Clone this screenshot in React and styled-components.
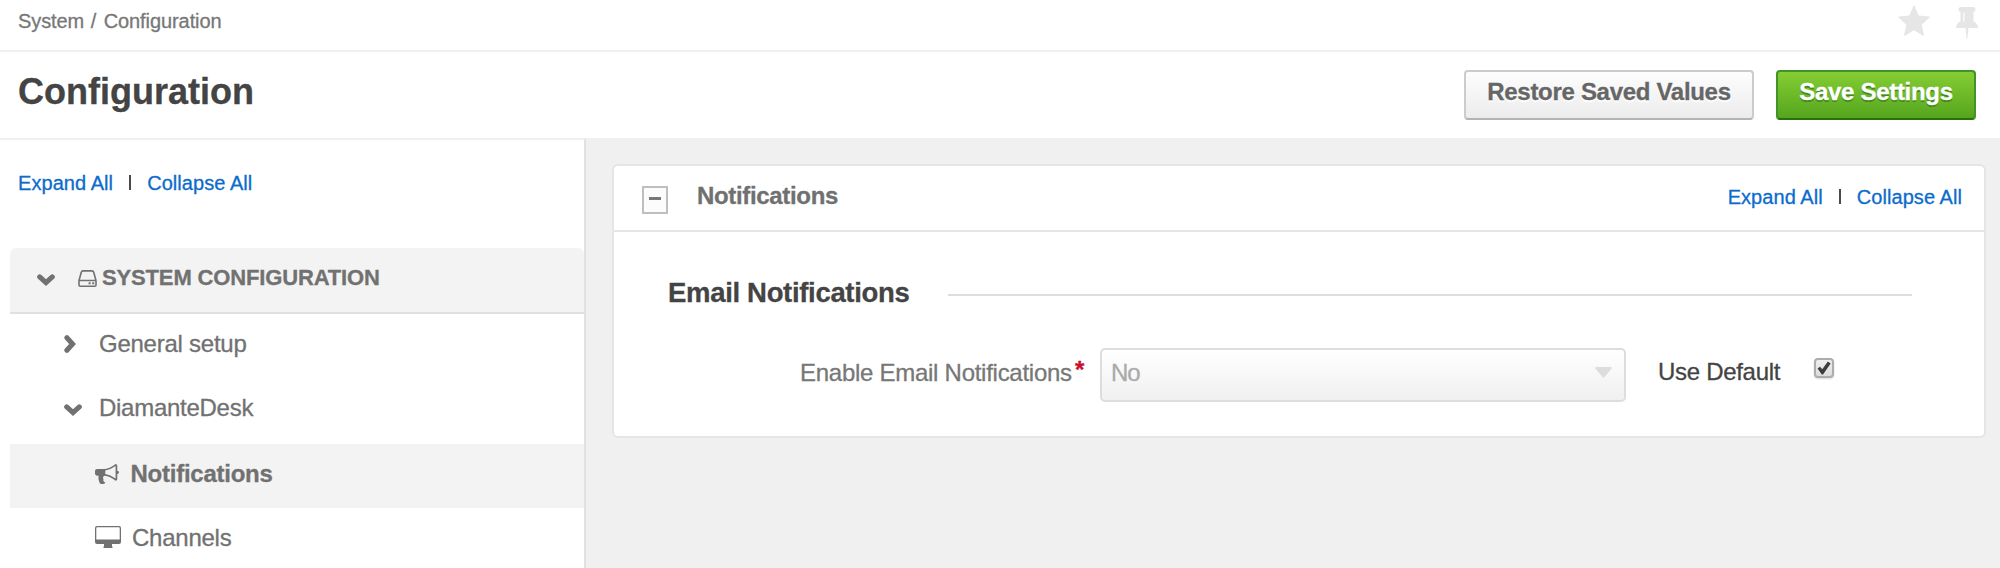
import React from 'react';
import styled, { createGlobalStyle } from 'styled-components';

const Global = createGlobalStyle`
  * { box-sizing: border-box; }
  body {
    margin: 0;
    background: #fff;
    color: #444;
    font-family: "Liberation Sans", Arial, sans-serif;
    -webkit-text-stroke: 0.3px;
    overflow: hidden;
  }
  h1, h2, h3 { margin: 0; }
`;

const Page = styled.div`
  display: flex;
  flex-direction: column;
  height: 568px;
  overflow: hidden;
`;

const TopBar = styled.div`
  display: flex;
  justify-content: space-between;
  height: 52px;
  padding: 5px 22px 0 18px;
  border-bottom: 2px solid #f0f0f0;
`;

const Breadcrumb = styled.nav`
  font-size: 20px;
  line-height: 32px;
  color: #777;
  letter-spacing: -0.08px;
`;

const Slash = styled.span`
  margin: 0 2px 0 1px;
`;

const Shortcuts = styled.div`
  display: flex;
  align-items: flex-start;
  gap: 26px;
  color: #e6e6e6;
`;

const Glyph = styled.svg`
  display: block;
  flex: none;
  width: ${(p) => p.$w}px;
  height: ${(p) => p.$h}px;
  margin: ${(p) => p.$m || 0};
  fill: currentColor;
`;

const TitleBar = styled.header`
  display: flex;
  justify-content: space-between;
  height: 86px;
  padding: 18px 24px 0 18px;
`;

const Title = styled.h1`
  font-size: 36px;
  line-height: 43px;
  color: #444;
`;

const Actions = styled.div`
  display: flex;
  gap: 22px;
`;

const Button = styled.button`
  width: ${(p) => p.$w}px;
  height: 50px;
  padding: 0 0 6px;
  border: 2px solid;
  border-radius: 4px;
  font: bold 24px/40px "Liberation Sans", Arial, sans-serif;
  letter-spacing: ${(p) => p.$ls}px;
  white-space: nowrap;
  ${(p) =>
    p.$primary
      ? `color: #fff; text-shadow: 0 2px 0 #418a1b;
         border-color: #43932b #43932b #29700f;
         background: linear-gradient(#85cd33, #55a51e);`
      : `color: #666; text-shadow: 0 2px 2px #fff;
         border-color: #ccc #ccc #b3b3b3;
         background: linear-gradient(#fdfdfd, #ececec);`}
`;

const Body = styled.div`
  display: flex;
  flex: 1;
  min-height: 0;
`;

const Sidebar = styled.aside`
  width: 586px;
  padding: 28px 0 0 10px;
  border-top: 2px solid #f0f0f0;
  border-right: 2px solid #e0e0e0;
`;

const Links = styled.div`
  display: flex;
  align-items: center;
  height: 30px;
  font-size: 20px;
  line-height: 30px;
`;

const SideLinks = styled(Links)`
  margin: 0 0 50px 8px;
`;

const Link = styled.a`
  color: #0b6ccb;
  letter-spacing: 0.06px;
  white-space: nowrap;
`;

const Bar = styled.span`
  width: 2px;
  height: 15px;
  margin: 0 16px 2px;
  background: #4a4a4a;
`;

const Row = styled.div`
  display: flex;
  align-items: flex-start;
  height: ${(p) => p.$h || 64}px;
  padding-left: ${(p) => p.$indent}px;
  background: ${(p) => (p.$filled ? '#f3f3f3' : 'transparent')};
  color: #717171;
`;

const GroupRow = styled(Row)`
  border-bottom: 2px solid #e0e0e0;
  border-radius: 6px 6px 0 0;
`;

const RowLabel = styled.span`
  margin-left: ${(p) => p.$gap}px;
  font-size: ${(p) => p.$size || 24}px;
  line-height: 60px;
  font-weight: ${(p) => (p.$bold ? 'bold' : 'normal')};
  letter-spacing: ${(p) => p.$ls || 0}px;
  white-space: nowrap;
`;

const Content = styled.main`
  flex: 1;
  padding: 26px 14px 0 26px;
  background: #f0f0f0;
`;

const Panel = styled.section`
  height: 274px;
  border: 2px solid #e5e5e5;
  border-radius: 6px;
  background: #fff;
`;

const PanelHead = styled.div`
  display: flex;
  align-items: flex-start;
  height: 66px;
  padding: 0 22px 0 28px;
  border-bottom: 2px solid #e5e5e5;
`;

const Toggle = styled.span`
  display: flex;
  justify-content: center;
  width: 26px;
  height: 28px;
  margin-top: 20px;
  padding-top: 9px;
  border: 2px solid #bfbfbf;
  background: #fcfcfc;
  &::before {
    content: '';
    width: 12px;
    height: 3px;
    background: #777;
  }
`;

const PanelTitle = styled.h2`
  flex: 1;
  margin-left: 29px;
  font-size: 24px;
  line-height: 60px;
  color: #707070;
  letter-spacing: -0.33px;
`;

const PanelLinks = styled(Links)`
  margin-top: 16px;
`;

const SectionHead = styled.div`
  display: flex;
  align-items: center;
  justify-content: space-between;
  height: 36px;
  margin: 45px 72px 0 54px;
`;

const SectionTitle = styled.h3`
  padding-bottom: 4px;
  font-size: 27.5px;
  line-height: 36px;
  color: #444;
  letter-spacing: -0.32px;
`;

const Rule = styled.span`
  width: 964px;
  height: 2px;
  background: #ddd;
`;

const Field = styled.div`
  display: flex;
  align-items: flex-start;
  margin-top: 35px;
  padding-left: 186px;
  font-size: 24px;
  line-height: 50px;
`;

const Label = styled.label`
  width: 275px;
  color: #777;
  letter-spacing: -0.27px;
  white-space: nowrap;
`;

const Required = styled.span`
  width: 25px;
  color: #c8102e;
  font-size: 24px;
  font-weight: bold;
  line-height: 44px;
`;

const Select = styled.div`
  display: flex;
  justify-content: space-between;
  width: 526px;
  height: 54px;
  padding: 0 12px 0 9px;
  border: 2px solid #ddd;
  border-radius: 5px;
  background: linear-gradient(#fff, #f0f0f0);
  color: #aaa;
  line-height: 46px;
  letter-spacing: -1px;
`;

const Caret = styled(Glyph)`
  color: #ddd;
`;

const UseDefault = styled.span`
  width: 156px;
  margin-left: 32px;
  line-height: 48px;
  letter-spacing: -0.3px;
`;

const Check = styled.span`
  display: flex;
  align-items: center;
  justify-content: center;
  width: 20px;
  height: 20px;
  margin-top: 10px;
  border: 2px solid #acacac;
  border-radius: 4px;
  background: linear-gradient(#eee, #ddd);
  box-shadow: 0 1px 2px rgba(0, 0, 0, 0.15);
  color: #3c3c3c;
`;

const ChevronDown = ({ $m = '26px 0 0' }) => (
  <Glyph $w={18} $h={12} viewBox="0 0 18 12" $m={$m}>
    <path d="M2.700 2.900 9 8.600l6.300-5.700" fill="none" stroke="currentColor" strokeWidth="5" strokeLinecap="round" />
  </Glyph>
);

const ChevronRight = () => (
  <Glyph $w={12} $h={18} viewBox="0 0 12 18" $m="21px 0 0">
    <path d="M2.900 2.700 8.600 9l-5.700 6.300" fill="none" stroke="currentColor" strokeWidth="5" strokeLinecap="round" />
  </Glyph>
);

const Disk = () => (
  <Glyph $w={19} $h={17} viewBox="0 0 19 17" $m="22px 0 0">
    <path
      d="M1 10.500V15q0 1.200 1.200 1.200h14.600q1.200 0 1.200-1.200v-4.500H1L3.300 2.200Q3.700.9 4.900.9h9.200q1.200 0 1.600 1.300L18 10.500"
      fill="none"
      stroke="currentColor"
      strokeWidth="1.6"
      strokeLinejoin="round"
    />
    <path d="M10.600 12.200h2v2h-2zM14.200 12.200h2v2h-2z" />
  </Glyph>
);

const Bullhorn = () => (
  <Glyph $w={24} $h={20} viewBox="0 0 1792 1536" preserveAspectRatio="none" $m="20px 0 0">
    <path d="M1664 512q53 0 90.500 37.500t37.500 90.500-37.500 90.500-90.500 37.500v384q0 52-38 90t-90 38q-417-347-812-380-58 19-91 66t-31 100.500 40 92.500q-20 33-23 65.500t6 58 33.500 55 48 50 61.500 50.500q-29 58-111.500 83t-168.500 11.500-132-55.500q-7-23-29.500-87.500t-32-94.500-23-89-15-101 3.500-98.500 22-110.500h-122q-66 0-113-47t-47-113v-192q0-66 47-113t113-47h480q435 0 896-384 52 0 90 38t38 90v384zm-128 604v-954q-394 302-768 343v270q377 42 768 341z" />
  </Glyph>
);

const Desktop = () => (
  <Glyph $w={26} $h={22} viewBox="0 0 26 22" $m="18px 0 0">
    <path
      fillRule="evenodd"
      d="M2 0h22q2 0 2 2v14q0 2-2 2h-7v2.200q0 .3.500.5v1.300h-9v-1.300q.5-.2.500-.5V18H2q-2 0-2-2V2Q0 0 2 0zm.2 1.300q-.9 0-.9.900v11.300h23.400V2.200q0-.9-.9-.9z"
    />
  </Glyph>
);

const LinkPair = () => (
  <>
    <Link>Expand All</Link>
    <Bar />
    <Link>Collapse All</Link>
  </>
);

export default function App() {
  return (
    <Page>
      <Global />
      <TopBar>
        <Breadcrumb>
          System <Slash>/</Slash> Configuration
        </Breadcrumb>
        <Shortcuts>
          <Glyph $w={32} $h={31} viewBox="0 0 32 31">
            <path d="M16.400.6l4.300 9.900 10.700 1.100q.7.400.2 1l-8 7.200 2.400 10.500q-.2.700-.9.400L16 25.200l-9.100 5.500q-.7.300-.9-.4l2.400-10.500-8-7.200q-.5-.6.200-1l10.700-1.100L15.600.6q.4-.6.800 0z" />
          </Glyph>
          <Glyph $w={22} $h={33} viewBox="0 0 22 33" $m="1px 0 0">
            <path
              fillRule="evenodd"
              d="M4.500 1h13q2 .2 2 2.500t-2 2.500v9.500q4.500 1.500 4.500 6.500h-9.500L11.300 33h-.6L9.500 22H0q0-5 4.500-6.500V6q-2-.2-2-2.500t2-2.500zM7.300 6.500v9h1.200v-9z"
            />
          </Glyph>
        </Shortcuts>
      </TopBar>
      <TitleBar>
        <Title>Configuration</Title>
        <Actions>
          <Button $w={290} $ls={-0.3}>Restore Saved Values</Button>
          <Button $w={200} $ls={-0.3} $primary>Save Settings</Button>
        </Actions>
      </TitleBar>
      <Body>
        <Sidebar>
          <SideLinks>
            <LinkPair />
          </SideLinks>
          <GroupRow $h={66} $indent={27} $filled>
            <ChevronDown $m="26px 23px 0 0" />
            <Disk />
            <RowLabel $gap={5} $bold $size={22} $ls={-0.15}>SYSTEM CONFIGURATION</RowLabel>
          </GroupRow>
          <Row $indent={54}>
            <ChevronRight />
            <RowLabel $gap={23} $ls={-0.25}>General setup</RowLabel>
          </Row>
          <Row $indent={54} $h={66}>
            <ChevronDown />
            <RowLabel $gap={17} $ls={-0.27}>DiamanteDesk</RowLabel>
          </Row>
          <Row $indent={85} $filled>
            <Bullhorn />
            <RowLabel $gap={11.5} $bold $ls={-0.25}>Notifications</RowLabel>
          </Row>
          <Row $indent={85}>
            <Desktop />
            <RowLabel $gap={11} $ls={-0.25}>Channels</RowLabel>
          </Row>
        </Sidebar>
        <Content>
          <Panel>
            <PanelHead>
              <Toggle />
              <PanelTitle>Notifications</PanelTitle>
              <PanelLinks>
                <LinkPair />
              </PanelLinks>
            </PanelHead>
            <SectionHead>
              <SectionTitle>Email Notifications</SectionTitle>
              <Rule />
            </SectionHead>
            <Field>
              <Label>Enable Email Notifications</Label>
              <Required>*</Required>
              <Select>
                No
                <Caret $w={17} $h={11} viewBox="0 0 17 11" $m="17px 0 0">
                  <path d="M1 0h15q1.400.5.500 1.800L9.600 10q-1.100 1.200-2.200 0L.5 1.800Q-.4.500 1 0z" />
                </Caret>
              </Select>
              <UseDefault>Use Default</UseDefault>
              <Check>
                <Glyph $w={14} $h={14} viewBox="0 0 14 14">
                  <path d="M.6 7.600 3 5.700l2.300 2.600L10.800.6l2.900 1.800L6 13.400H4.800z" />
                </Glyph>
              </Check>
            </Field>
          </Panel>
        </Content>
      </Body>
    </Page>
  );
}
